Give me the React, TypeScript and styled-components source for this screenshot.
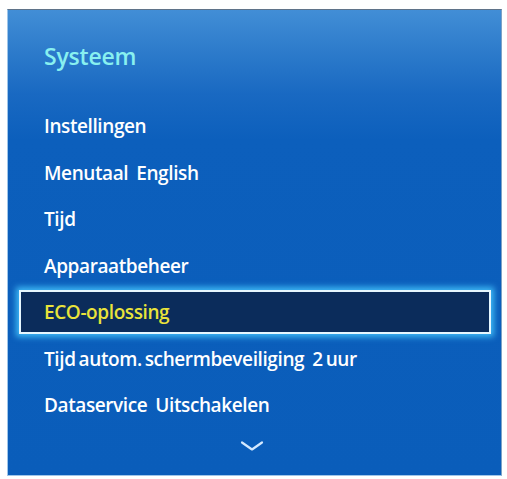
import React from "react";
import styled, { createGlobalStyle } from "styled-components";

const Global = createGlobalStyle`
  html, body { margin: 0; padding: 0; background: #ffffff; }
  body { font-family: "Open Sans", "DejaVu Sans", sans-serif; }
`;

const Page = styled.div`
  width: 507px;
  height: 479px;
  padding: 9px 0 0 7px;
  box-sizing: border-box;
`;

const Panel = styled.div`
  width: 495px;
  height: 467px;
  box-sizing: border-box;
  border-top: 1px solid #5f7389;
  border-left: 1px solid #9fc6ea;
  border-right: 1px solid #7ea3c6;
  border-bottom: 1px solid #9fc6ea;
  background: linear-gradient(
    180deg,
    #428ed6 0%,
    #2f7dcc 8%,
    #1969c2 18%,
    #0c5fbc 28%,
    #0a5dba 100%
  );
  display: flex;
  flex-direction: column;
  padding: 0 10px 0 11px;
`;

const Title = styled.h1`
  margin: 0;
  height: 93px;
  display: flex;
  align-items: center;
  padding: 0 0 0 25px;
  box-sizing: border-box;
  font-size: 23px;
  font-weight: 600;
  color: #88f0f0;
  letter-spacing: -0.2px;
  transform: translateY(-1px);
`;

const List = styled.ul`
  list-style: none;
  margin: 0;
  padding: 0;
  display: flex;
  flex-direction: column;
`;

const Row = styled.li`
  height: 46.5px;
  display: flex;
  align-items: center;
`;

const Item = styled.div<{ $selected?: boolean }>`
  flex: 1;
  height: 44px;
  box-sizing: border-box;
  display: flex;
  align-items: center;
  gap: 8px;
  padding-left: 23px;
  border: 2px solid ${(p) => (p.$selected ? "#e6f7ff" : "transparent")};
  background: ${(p) => (p.$selected ? "#0b2c5b" : "transparent")};
  box-shadow: ${(p) =>
    p.$selected ? "0 0 6px 3px rgba(70, 200, 255, 0.85)" : "none"};
  font-size: 19px;
  font-weight: 600;
  letter-spacing: -0.4px;
  word-spacing: -1.5px;
  color: ${(p) => (p.$selected ? "#e9e33a" : "#ffffff")};
  white-space: nowrap;
`;

const Value = styled.span``;

const More = styled.div`
  display: flex;
  justify-content: center;
  padding-top: 11px;
  padding-right: 6px;
`;

const items: { label: string; value?: string }[] = [
  { label: "Instellingen" },
  { label: "Menutaal", value: "English" },
  { label: "Tijd" },
  { label: "Apparaatbeheer" },
  { label: "ECO-oplossing" },
  { label: "Tijd autom. schermbeveiliging", value: "2 uur" },
  { label: "Dataservice", value: "Uitschakelen" },
];

export default function App() {
  return (
    <Page>
      <Global />
      <Panel>
        <Title>Systeem</Title>
        <List>
          {items.map((it, i) => (
            <Row key={it.label}>
              <Item $selected={i === 4}>
                <span>{it.label}</span>
                {it.value && <Value>{it.value}</Value>}
              </Item>
            </Row>
          ))}
        </List>
        <More>
          <svg width="24" height="12" viewBox="0 0 24 12">
            <path
              d="M2 2.5 L12 9.5 L22 2.5"
              fill="none"
              stroke="#d4e9ff"
              strokeWidth="2.2"
              strokeLinecap="round"
              strokeLinejoin="round"
            />
          </svg>
        </More>
      </Panel>
    </Page>
  );
}
